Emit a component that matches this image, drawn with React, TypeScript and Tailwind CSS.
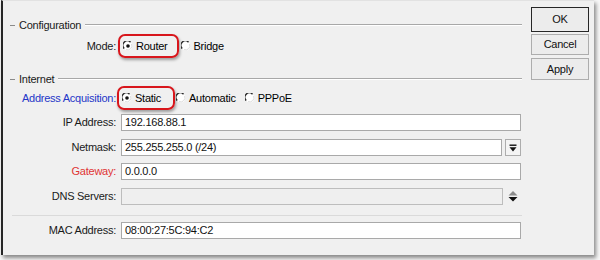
import type { ReactNode } from 'react'

const font = { fontFamily: '"Liberation Sans", Arial, sans-serif' }

function Radio({ checked }: { checked?: boolean }) {
  return (
    <svg width="10" height="10" viewBox="0 0 10 10" className="shrink-0">
      <circle cx="5" cy="5" r="4.5" fill="#fff" />
      <path d="M1.2 7.5 A4.3 4.3 0 0 1 7.5 1.2" fill="none" stroke="#2a2a2a" strokeWidth="1.4" />
      <path d="M8.6 3 A4.3 4.3 0 0 1 3 8.6" fill="none" stroke="#dcdcdc" strokeWidth="1" />
      {checked && <circle cx="5" cy="5" r="1.8" fill="#111" />}
    </svg>
  )
}

function RadioItem({ label, checked, children }: { label: string; checked?: boolean; children?: ReactNode }) {
  return (
    <div className="relative flex items-center gap-[3px] h-[12px]">
      {children}
      <Radio checked={checked} />
      <span>{label}</span>
    </div>
  )
}

function Highlight({ right }: { right: string }) {
  return (
    <div
      className={`absolute -left-[5px] -top-[6px] -bottom-[6px] ${right} rounded-[7px] border-[2.5px] border-[#d8161c] shadow-[1px_2px_3px_rgba(0,0,0,0.35)]`}
    />
  )
}

function GroupHeader({ title }: { title: string }) {
  return (
    <div className="flex items-center h-[14px] pl-[7px]">
      <span className="w-[5px] h-px bg-[#8a8a8a]" />
      <span className="ml-[4px] text-[#1a1a1a]">{title}</span>
      <div className="flex-1 ml-[4px] border-t border-[#a8a8a8] border-b border-b-white" />
    </div>
  )
}

function Label({ children, color = 'text-[#1a1a1a]' }: { children: ReactNode; color?: string }) {
  return <div className={`w-[113px] shrink-0 text-right ${color}`}>{children}</div>
}

function Field({ value, disabled }: { value?: string; disabled?: boolean }) {
  return (
    <div
      className={`flex-1 h-[17px] flex items-center px-[3px] border ${
        disabled ? 'bg-[#efefef] border-[#bdbdbd]' : 'bg-white border-[#a9a9a9]'
      } text-[#111]`}
    >
      {value}
    </div>
  )
}

function Button({ label, primary, h }: { label: string; primary?: boolean; h: string }) {
  return (
    <div
      className={`${h} w-[58px] flex items-center justify-center text-[#111] bg-[#ececec] border ${
        primary ? 'border-[#262626]' : 'border-[#adadad]'
      }`}
    >
      {label}
    </div>
  )
}

export default function App() {
  return (
    <div className="w-[600px] h-[260px] bg-[#f7f7f7] overflow-hidden text-[11px] tracking-[-0.25px]" style={font}>
      <div className="ml-[1px] w-[593px] h-[255px] bg-[#f0f0f0] border-l-2 border-[#262626] border-t border-t-[#e2e2e2] shadow-[2px_3px_4px_rgba(0,0,0,0.45)] flex">
        {/* main form */}
        <div className="w-[519px] pt-[17px] flex flex-col">
          <GroupHeader title="Configuration" />

          <div className="flex items-center h-[24px] mt-[2px]">
            <Label>Mode:</Label>
            <div className="flex items-center ml-[7px] gap-[13px]">
              <RadioItem label="Router" checked>
                <Highlight right="-right-[11px]" />
              </RadioItem>
              <RadioItem label="Bridge" />
            </div>
          </div>

          <div className="mt-[14px]">
            <GroupHeader title="Internet" />
          </div>

          <div className="flex items-center h-[24px]">
            <Label color="text-[#2436c8]">Address Acquisition:</Label>
            <div className="flex items-center ml-[6px]">
              <RadioItem label="Static" checked>
                <Highlight right="-right-[14px]" />
              </RadioItem>
              <div className="ml-[15px]">
                <RadioItem label="Automatic" />
              </div>
              <div className="ml-[9px]">
                <RadioItem label="PPPoE" />
              </div>
            </div>
          </div>

          <div className="flex items-center mt-[4px] pr-[1px]">
            <Label>IP Address:</Label>
            <div className="ml-[5px] flex-1 flex">
              <Field value="192.168.88.1" />
            </div>
          </div>

          <div className="flex items-center mt-[8px] pr-[1px]">
            <Label>Netmask:</Label>
            <div className="ml-[5px] flex-1 flex items-center gap-[3px]">
              <Field value="255.255.255.0 (/24)" />
              <div className="w-[16px] h-[17px] border border-[#adadad] bg-[#f4f4f4] flex items-center justify-center">
                <svg width="8" height="8" viewBox="0 0 8 8">
                  <rect x="0.5" y="0.5" width="7" height="1.4" fill="#111" />
                  <path d="M0.5 3.2 H7.5 L4 7.5 Z" fill="#111" />
                </svg>
              </div>
            </div>
          </div>

          <div className="flex items-center mt-[7px] pr-[1px]">
            <Label color="text-[#e03434]">Gateway:</Label>
            <div className="ml-[5px] flex-1 flex">
              <Field value="0.0.0.0" />
            </div>
          </div>

          <div className="flex items-center mt-[8px] pr-[1px]">
            <Label>DNS Servers:</Label>
            <div className="ml-[5px] flex-1 flex items-center">
              <div className="w-[382px] flex">
                <Field disabled />
              </div>
              <div className="ml-[5px] flex items-center">
                <svg width="10" height="13" viewBox="0 0 10 13">
                  <path d="M0.5 5.5 L5 1 L9.5 5.5 Z" fill="#8c8c8c" />
                  <path d="M0.5 7 H9.5 L5 11.5 Z" fill="#111" />
                </svg>
              </div>
            </div>
          </div>

          <div className="mt-[10px] ml-[9px] h-px bg-[#dadada]" />

          <div className="flex items-center mt-[6px] pr-[1px]">
            <Label>MAC Address:</Label>
            <div className="ml-[5px] flex-1 flex">
              <Field value="08:00:27:5C:94:C2" />
            </div>
          </div>
        </div>

        {/* buttons */}
        <div className="ml-[9px] pt-[6px] flex flex-col">
          <Button label="OK" primary h="h-[25px]" />
          <div className="mt-[2px]">
            <Button label="Cancel" h="h-[21px]" />
          </div>
          <div className="mt-[3px]">
            <Button label="Apply" h="h-[22px]" />
          </div>
        </div>
      </div>
    </div>
  )
}
